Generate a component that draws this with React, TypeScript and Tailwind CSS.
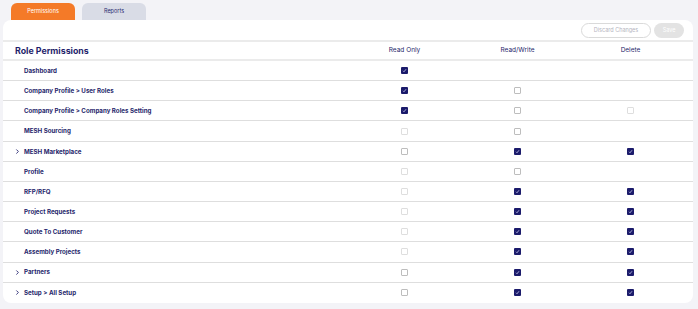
import { ChevronRight } from "lucide-react"

type Cell = "on" | "off" | "dim" | null

const rows: { label: string; expand?: boolean; cells: Cell[] }[] = [
  { label: "Dashboard", cells: ["on", null, null] },
  { label: "Company Profile > User Roles", cells: ["on", "off", null] },
  { label: "Company Profile > Company Roles Setting", cells: ["on", "off", "dim"] },
  { label: "MESH Sourcing", cells: ["dim", "off", null] },
  { label: "MESH Marketplace", expand: true, cells: ["off", "on", "on"] },
  { label: "Profile", cells: ["dim", "off", null] },
  { label: "RFP/RFQ", cells: ["dim", "on", "on"] },
  { label: "Project Requests", cells: ["dim", "on", "on"] },
  { label: "Quote To Customer", cells: ["dim", "on", "on"] },
  { label: "Assembly Projects", cells: ["dim", "on", "on"] },
  { label: "Partners", expand: true, cells: ["off", "on", "on"] },
  { label: "Setup > All Setup", expand: true, cells: ["off", "on", "on"] },
]

function Box({ state }: { state: Cell }) {
  if (!state) return null
  if (state === "on") {
    return (
      <span className="w-[7px] h-[7px] rounded-[1px] bg-[#1b1b6b] flex items-center justify-center">
        <svg width="5" height="5" viewBox="0 0 10 10">
          <path d="M2 5.5 L4 7.5 L8 2.5" stroke="#c9c9ee" strokeWidth="1.6" fill="none" />
        </svg>
      </span>
    )
  }
  return (
    <span
      className={`w-[7px] h-[7px] rounded-[1px] bg-white border ${
        state === "dim" ? "border-[#dedede]" : "border-[#bdbdbd]"
      }`}
    />
  )
}

export default function App() {
  return (
    <div
      className="min-h-screen bg-[#f3f3f7] pt-[3px] px-[3px]"
      style={{ fontFamily: "Inter, 'Noto Sans', sans-serif" }}
    >
      {/* Tabs */}
      <div className="flex gap-[7px] ml-[8px]">
        <div className="w-[64px] h-[17px] rounded-t-[6px] bg-[#f47a28] text-white text-[5.5px] flex items-center justify-center">
          Permissions
        </div>
        <div className="w-[64px] h-[17px] rounded-t-[6px] bg-[#d9dce6] text-[#2a2a70] text-[5.5px] flex items-center justify-center">
          Reports
        </div>
      </div>

      {/* Card */}
      <div className="w-[690px] h-[283px] bg-white rounded-[8px] text-[#1f1f6b]">
        <div className="h-[22px] flex items-center justify-end gap-[3px] pr-[9px] border-b-2 border-[#ebebeb]">
          <button className="w-[70px] h-[15px] rounded-full border border-[#dadada] text-[5.5px] text-[#b5b5c0]">
            Discard Changes
          </button>
          <button className="w-[30px] h-[15px] rounded-full bg-[#e3e3e3] text-[5.5px] text-white">
            Save
          </button>
        </div>

        <div className="grid grid-cols-[345px_113px_113px_113px] h-[19px] items-center border-b-2 border-[#ebebeb]">
          <div className="pl-[12px] text-[8.8px] font-bold">Role Permissions</div>
          <div className="text-center text-[6.5px]">Read Only</div>
          <div className="text-center text-[6.5px]">Read/Write</div>
          <div className="text-center text-[6.5px]">Delete</div>
        </div>

        {rows.map((r, i) => (
          <div
            key={r.label}
            className={`grid grid-cols-[345px_113px_113px_113px] h-[20.17px] items-center ${
              i < rows.length - 1 ? "border-b border-[#dedede]" : ""
            }`}
          >
            <div className="flex items-center pl-[11px] text-[6.2px] font-bold">
              <span className="w-[10px] flex items-center">
                {r.expand && <ChevronRight size={7} strokeWidth={3} />}
              </span>
              {r.label}
            </div>
            {r.cells.map((c, j) => (
              <div key={j} className="flex justify-center">
                <Box state={c} />
              </div>
            ))}
          </div>
        ))}
      </div>
    </div>
  )
}
